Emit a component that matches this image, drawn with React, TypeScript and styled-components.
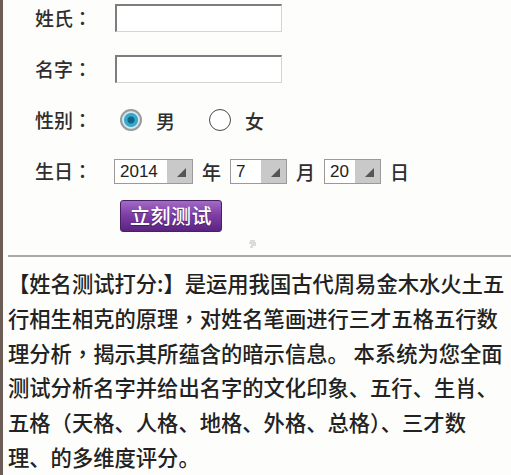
import React from "react";
import styled, { createGlobalStyle } from "styled-components";

const Global = createGlobalStyle`
  html, body { margin: 0; padding: 0; background: #fdfdfb; }
  body {
    font-family: "Noto Sans CJK SC", "Noto Sans", sans-serif;
    font-weight: 500;
    color: #2a2a2a;
    border-left: 3px solid #6b5d55;
    min-height: 475px;
    box-sizing: border-box;
    overflow: hidden;
  }
`;

const Page = styled.div`
  width: 508px;
  height: 475px;
  display: flex;
  flex-direction: column;
`;

const Form = styled.div`
  display: flex;
  flex-direction: column;
  gap: 23px;
  padding: 4px 0 0 32px;
`;

const Row = styled.div`
  display: flex;
  align-items: center;
  height: 28px;
`;

const Label = styled.div`
  width: 80px;
  font-size: 19px;
  line-height: 28px;
  color: #2e2e2e;
  white-space: nowrap;
`;

const Punct = styled.span`
  font-family: "Noto Sans CJK TC", "Noto Sans CJK SC", sans-serif;
`;

const TextInput = styled.div`
  width: 167px;
  height: 28px;
  box-sizing: border-box;
  background: #fff;
  border-top: 2px solid #7d7d7d;
  border-left: 2px solid #7d7d7d;
  border-right: 1px solid #d4d4d4;
  border-bottom: 1px solid #d4d4d4;
`;

const RadioOption = styled.div<{ $first?: boolean }>`
  display: flex;
  align-items: center;
  margin-left: ${(p) => (p.$first ? "5px" : "34px")};
  gap: 14px;
  font-size: 19px;
  color: #2e2e2e;
`;

const RadioCircle = styled.div<{ $on?: boolean }>`
  width: 22px;
  height: 22px;
  box-sizing: border-box;
  border-radius: 50%;
  border: ${(p) => (p.$on ? "2px solid #9a9a9a" : "1.5px solid #4a4a4a")};
  background: ${(p) =>
    p.$on
      ? "radial-gradient(circle, #0d6784 0 3px, #39a6ca 4px 6.5px, #cfe9f2 7.5px)"
      : "#fff"};
`;

const Select = styled.div<{ $w: number; $first?: boolean }>`
  width: ${(p) => p.$w}px;
  height: 25px;
  box-sizing: border-box;
  display: flex;
  border: 1px solid #9a9a9a;
  margin-left: ${(p) => (p.$first ? "-1px" : "0")};
  background: #fff;
`;

const SelectValue = styled.div`
  flex: 1;
  font-family: "Liberation Sans", "Noto Sans", sans-serif;
  font-size: 17px;
  line-height: 23px;
  padding-left: 5px;
  color: #222;
`;

const SelectArrow = styled.div`
  width: 25px;
  background: #c9c9c9;
  display: flex;
  align-items: flex-end;
  justify-content: flex-end;
  padding: 0 6px 6px 0;
  box-sizing: border-box;
`;

const Unit = styled.div`
  font-size: 19px;
  color: #2e2e2e;
  margin: 0 9px;
`;

const ButtonRow = styled.div`
  display: flex;
  padding-left: 85px;
  margin-top: -8px;
`;

const Button = styled.div`
  width: 102px;
  height: 32px;
  box-sizing: border-box;
  border: 1px solid #4b1f66;
  border-radius: 3px;
  background: linear-gradient(#a36ac6 0%, #7f3fa6 45%, #5b2380 100%);
  color: #fff;
  font-size: 20px;
  line-height: 29px;
  text-align: center;
  letter-spacing: 0.5px;
  text-shadow: 0 1px 1px rgba(0, 0, 0, 0.35);
`;

const Mark = styled.div`
  height: 23px;
  display: flex;
  padding-left: 245px;
  align-items: center;
`;

const Divider = styled.div`
  height: 2px;
  margin-left: 5px;
  background: #a9a9a9;
`;

const Paragraph = styled.div`
  padding: 9px 0 0 5px;
  font-size: 21.3px;
  line-height: 34.8px;
  color: #222;
  white-space: nowrap;
`;

const Tri = () => (
  <svg width="9" height="9" viewBox="0 0 9 9">
    <polygon points="9,0 9,9 0,9" fill="#555" />
  </svg>
);

const Colon = () => <Punct>：</Punct>;

export default function App() {
  return (
    <Page>
      <Global />
      <Form>
        <Row>
          <Label>
            姓氏<Colon />
          </Label>
          <TextInput />
        </Row>
        <Row>
          <Label>
            名字<Colon />
          </Label>
          <TextInput />
        </Row>
        <Row>
          <Label>
            性别<Colon />
          </Label>
          <RadioOption $first>
            <RadioCircle $on />
            男
          </RadioOption>
          <RadioOption>
            <RadioCircle />
            女
          </RadioOption>
        </Row>
        <Row>
          <Label>
            生日<Colon />
          </Label>
          <Select $w={79} $first>
            <SelectValue>2014</SelectValue>
            <SelectArrow>
              <Tri />
            </SelectArrow>
          </Select>
          <Unit>年</Unit>
          <Select $w={57}>
            <SelectValue>7</SelectValue>
            <SelectArrow>
              <Tri />
            </SelectArrow>
          </Select>
          <Unit>月</Unit>
          <Select $w={57}>
            <SelectValue>20</SelectValue>
            <SelectArrow>
              <Tri />
            </SelectArrow>
          </Select>
          <Unit>日</Unit>
        </Row>
        <ButtonRow>
          <Button>立刻测试</Button>
        </ButtonRow>
      </Form>
      <Mark>
        <svg width="10" height="8" viewBox="0 0 10 8">
          <path d="M2 1h5M1 3h7M3 5h5M2 7h3" stroke="#aaa" strokeWidth="0.8" />
        </svg>
      </Mark>
      <Divider />
      <Paragraph>
        <div>【姓名测试打分:】是运用我国古代周易金木水火土五</div>
        <div>
          行相生相克的原理<Punct>，</Punct>对姓名笔画进行三才五格五行数
        </div>
        <div>
          理分析<Punct>，</Punct>揭示其所蕴含的暗示信息。 本系统为您全面
        </div>
        <div>测试分析名字并给出名字的文化印象、五行、生肖、</div>
        <div>
          五格<Punct>（</Punct>天格、人格、地格、外格、总格<Punct>）</Punct>、三才数
        </div>
        <div>理、的多维度评分。</div>
      </Paragraph>
    </Page>
  );
}
